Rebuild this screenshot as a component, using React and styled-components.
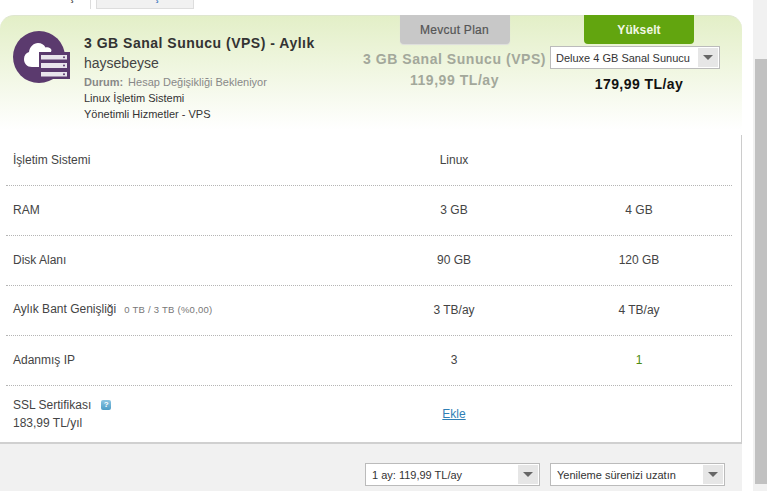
import React from "react";
import styled, { createGlobalStyle } from "styled-components";

const GlobalStyle = createGlobalStyle`
  html, body {
    margin: 0;
    padding: 0;
    height: 100%;
    overflow: hidden;
    background: #fff;
  }
  body {
    font-family: "Liberation Sans", Arial, sans-serif;
    color: #333;
  }
`;

const Page = styled.div`
  display: flex;
  width: 767px;
  height: 491px;
  overflow: hidden;
`;

const Main = styled.div`
  width: 742px;
  flex-shrink: 0;
`;

const Gutter = styled.div`
  width: 11px;
  flex-shrink: 0;
`;

const ScrollTrack = styled.div`
  width: 14px;
  flex-shrink: 0;
  background: #f1f1f1;
  padding: 59px 0 7px 2px;
  box-sizing: border-box;
`;

const ScrollThumb = styled.div`
  height: 100%;
  background: #c1c1c1;
`;

const Tabs = styled.div`
  display: flex;
  height: 10px;
  overflow: hidden;
  margin-bottom: 5px;
`;

const Tab = styled.div`
  width: ${(p) => p.$width}px;
  height: 9px;
  margin-left: ${(p) => p.$offset}px;
  padding-left: ${(p) => p.$textAt}px;
  box-sizing: border-box;
  font-size: 12px;
  line-height: 12px;
  color: ${(p) => (p.$active ? "#333" : "#2a6ebb")};
  background: ${(p) => (p.$active ? "#fff" : "#f1f1f1")};
  border: ${(p) => (p.$active ? "0" : "1px solid #ddd")};
  border-right: 1px solid #ddd;
  border-top: 0;
`;

// only the tail of the tab label shows above the fold
const TabLabel = styled.span`
  display: block;
  transform: translateY(-10px);
`;

const Header = styled.div`
  height: 120px;
  box-sizing: border-box;
  border-top: 1px solid #dfe6d0;
  border-radius: 14px 14px 0 0;
  background: linear-gradient(180deg, #e3efc7 0%, #ffffff 96%);
  display: grid;
  grid-template-columns: 363px 183px 186px;
`;

const Plan = styled.div`
  display: flex;
  padding: 15px 0 0 13px;
  gap: 14px;
`;

const Logo = styled.svg`
  width: 57px;
  height: 54px;
  flex-shrink: 0;
`;

const PlanInfo = styled.div`
  display: flex;
  flex-direction: column;
`;

const PlanTitle = styled.div`
  font-size: 14px;
  font-weight: bold;
  letter-spacing: 0.5px;
  line-height: 20px;
  margin-top: 2px;
  color: #333;
`;

const PlanUser = styled.div`
  font-size: 14px;
  line-height: 18px;
  margin: 1px 0 2px;
  color: #444;
`;

const PlanLine = styled.div`
  font-size: 11px;
  line-height: 16px;
  color: ${(p) => (p.$muted ? "#888" : "#333")};
  b {
    margin-right: 5px;
  }
`;

const CompareColumn = styled.div`
  display: flex;
  flex-direction: column;
  align-items: center;
  margin-top: -1px;
`;

const PlanButton = styled.div`
  width: 110px;
  height: 29px;
  border-radius: 0 0 4px 4px;
  display: flex;
  align-items: center;
  justify-content: center;
  font-size: 12px;
  font-weight: ${(p) => (p.$primary ? "bold" : "normal")};
  letter-spacing: ${(p) => (p.$primary ? "0.1px" : "0.25px")};
  -webkit-text-stroke: ${(p) => (p.$primary ? "0" : "0.2px #555")};
  color: ${(p) => (p.$primary ? "#f2f7e6" : "#555")};
  background: ${(p) => (p.$primary ? "#62a50f" : "#c8c8c8")};
  box-shadow: ${(p) => (p.$primary ? "none" : "0 1px 1px #ddd")};
`;

const CurrentName = styled.div`
  font-size: 14px;
  font-weight: bold;
  letter-spacing: 0.55px;
  line-height: 20px;
  margin-top: 5px;
  white-space: nowrap;
  color: #a3a89b;
`;

const CurrentPrice = styled(CurrentName)`
  margin-top: 1px;
`;

const NewPrice = styled.div`
  font-size: 14px;
  font-weight: bold;
  letter-spacing: 0.45px;
  line-height: 20px;
  margin-top: 5px;
  color: #111;
`;

const Select = styled.div`
  width: ${(p) => p.$width}px;
  height: 23px;
  box-sizing: border-box;
  border: 1px solid #bbb;
  background: #fff;
  display: flex;
  align-items: center;
  padding: 1px 1px 1px 6px;
  font-size: 11px;
  color: #333;
`;

const PlanSelect = styled(Select)`
  margin: 2px 8px 0 0;
  padding-left: 5px;
`;

const SelectLabel = styled.span`
  flex: 1;
  white-space: nowrap;
  overflow: hidden;
`;

const SelectArrow = styled.span`
  width: 20px;
  height: 100%;
  background: #e6e6e6;
  display: flex;
  align-items: center;
  justify-content: center;
  &:after {
    content: "";
    border-left: 5px solid transparent;
    border-right: 5px solid transparent;
    border-top: 5px solid #666;
  }
`;

const Table = styled.div`
  height: 309px;
  box-sizing: border-box;
  padding: 1px 9px 0 6px;
  border-right: 1px solid #ccc;
  border-bottom: 2px solid #d0d0d0;
`;

const Row = styled.div`
  display: grid;
  grid-template-columns: 356px 184px 186px;
  height: ${(p) => p.$height || 50}px;
  padding-bottom: ${(p) => (p.$last ? 0 : 2)}px;
  box-sizing: border-box;
  align-items: center;
  font-size: 12px;
  color: #444;
  border-bottom: ${(p) => (p.$last ? "0" : "1px dotted #b5b5b5")};
`;

const Label = styled.div`
  padding-left: 7px;
  line-height: 18px;
`;

const Value = styled.div`
  text-align: center;
  color: ${(p) => p.$color || "inherit"};
`;

const Usage = styled.span`
  font-size: 9.5px;
  color: #777;
  margin-left: 8px;
  letter-spacing: 0.25px;
`;

const Help = styled.span`
  display: inline-flex;
  width: 10px;
  height: 10px;
  margin-left: 10px;
  border-radius: 2px;
  align-items: center;
  justify-content: center;
  vertical-align: 2px;
  font-size: 8px;
  font-weight: bold;
  color: #fff;
  background: linear-gradient(180deg, #8cc5e2, #4d9cc6);
`;

const AddLink = styled.a`
  color: #2f7fb5;
  text-decoration: underline;
`;

const Footer = styled.div`
  height: 47px;
  box-sizing: border-box;
  background: #f1f1f1;
  display: flex;
  gap: 10px;
  padding: 19px 0 0 365px;
`;

const rows = [
  { label: "İşletim Sistemi", current: "Linux", next: "" },
  { label: "RAM", current: "3 GB", next: "4 GB" },
  { label: "Disk Alanı", current: "90 GB", next: "120 GB" },
  {
    label: "Aylık Bant Genişliği",
    usage: "0 TB / 3 TB (%0,00)",
    current: "3 TB/ay",
    next: "4 TB/ay",
  },
  { label: "Adanmış IP", current: "3", next: "1", nextColor: "#4c8a10" },
];

function CloudServerLogo() {
  return (
    <Logo viewBox="0 0 57 54">
      <circle cx="26" cy="26" r="26" fill="#5b3a6e" />
      <path
        d="M19 36c-5 0-8-3.500-8-8 0-3.500 2-6 5-7 .5-5 4.500-9 9-9 3.500 0 6 1.500 7.500 4.500 2.500-.8 5 0 6 2.500l-.5 2H26v15z"
        fill="#fff"
      />
      <rect x="26" y="21" width="31" height="27" fill="#5b3a6e" />
      <rect x="28" y="24" width="26" height="4.500" fill="#e9e4ec" />
      <rect x="28" y="32" width="26" height="5" fill="#e9e4ec" />
      <rect x="28" y="41" width="26" height="4.500" fill="#e9e4ec" />
      <circle cx="51" cy="26.200" r="1" fill="#5b3a6e" />
      <circle cx="51" cy="34.500" r="1" fill="#5b3a6e" />
      <circle cx="51" cy="43.200" r="1" fill="#5b3a6e" />
    </Logo>
  );
}

export default function App() {
  return (
    <Page>
      <GlobalStyle />
      <Main>
        <Tabs>
          <Tab $active $width={91} $offset={0} $textAt={69}>
            <TabLabel>ş</TabLabel>
          </Tab>
          <Tab $width={98} $offset={5} $textAt={57}>
            <TabLabel>ş</TabLabel>
          </Tab>
        </Tabs>
        <Header>
          <Plan>
            <CloudServerLogo />
            <PlanInfo>
              <PlanTitle>3 GB Sanal Sunucu (VPS) - Aylık</PlanTitle>
              <PlanUser>haysebeyse</PlanUser>
              <PlanLine $muted>
                <b>Durum:</b>Hesap Değişikliği Bekleniyor
              </PlanLine>
              <PlanLine>Linux İşletim Sistemi</PlanLine>
              <PlanLine>Yönetimli Hizmetler - VPS</PlanLine>
            </PlanInfo>
          </Plan>
          <CompareColumn>
            <PlanButton>Mevcut Plan</PlanButton>
            <CurrentName>3 GB Sanal Sunucu (VPS)</CurrentName>
            <CurrentPrice>119,99 TL/ay</CurrentPrice>
          </CompareColumn>
          <CompareColumn>
            <PlanButton $primary>Yükselt</PlanButton>
            <PlanSelect $width={170}>
              <SelectLabel>Deluxe 4 GB Sanal Sunucu</SelectLabel>
              <SelectArrow />
            </PlanSelect>
            <NewPrice>179,99 TL/ay</NewPrice>
          </CompareColumn>
        </Header>
        <Table>
          {rows.map((row) => (
            <Row key={row.label}>
              <Label>
                {row.label}
                {row.usage && <Usage>{row.usage}</Usage>}
              </Label>
              <Value>{row.current}</Value>
              <Value $color={row.nextColor}>{row.next}</Value>
            </Row>
          ))}
          <Row $last $height={56}>
            <Label>
              SSL Sertifikası
              <Help>?</Help>
              <br />
              183,99 TL/yıl
            </Label>
            <Value>
              <AddLink>Ekle</AddLink>
            </Value>
            <Value />
          </Row>
        </Table>
        <Footer>
          <Select $width={175}>
            <SelectLabel>1 ay: 119,99 TL/ay</SelectLabel>
            <SelectArrow />
          </Select>
          <Select $width={175}>
            <SelectLabel>Yenileme sürenizi uzatın</SelectLabel>
            <SelectArrow />
          </Select>
        </Footer>
      </Main>
      <Gutter />
      <ScrollTrack>
        <ScrollThumb />
      </ScrollTrack>
    </Page>
  );
}
